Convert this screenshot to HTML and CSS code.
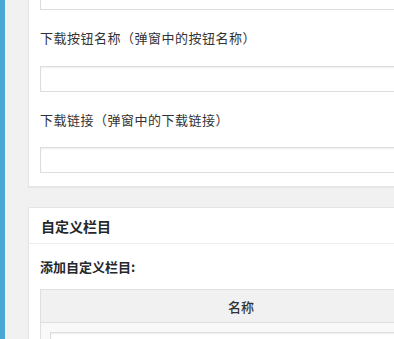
FILE: index.html
```
<!DOCTYPE html>
<html lang="zh-CN">

<head>
    <meta charset="UTF-8">
    <meta name="viewport" content="width=device-width, initial-scale=1.0">
    <title>自定义栏目</title>

    <link rel="stylesheet" href="styles.css">
</head>

<body>
    <div class="wrapper">
        <div class="sidebar"></div>
        <div class="content">
            <div class="postbox postbox-top">
                <div class="inside">
                    <input class="input-style" type="text">
                    <p class="field-label">下载按钮名称（弹窗中的按钮名称）</p>
                    <input class="input-style" type="text">
                    <p class="field-label">下载链接（弹窗中的下载链接）</p>
                    <input class="input-style input-last" type="text">
                </div>
            </div>

            <div class="postbox">
                <h2 class="postbox-title">自定义栏目</h2>
                <div class="inside">
                    <p class="add-title">添加自定义栏目:</p>
                    <table class="meta-table">
                        <thead>
                            <tr>
                                <th class="col-name">名称</th>
                                <th class="col-value">值</th>
                            </tr>
                        </thead>
                        <tbody>
                            <tr>
                                <td><input class="input-style" type="text"></td>
                                <td><input class="input-style" type="text"></td>
                            </tr>
                        </tbody>
                    </table>
                </div>
            </div>
        </div>
    </div>
</body>

</html>
```

FILE: styles.css
```
:root {
    --text-color: #333333;
    --border-color: #e5e5e5;
    --input-border: #dddddd;
    --background-color: #f1f1f1;
    --blue: #4aa6d3;
}

* {
    margin: 0;
    padding: 0;
    box-sizing: border-box;
}

html,
body {
    height: 100%;
    overflow: hidden;
}

body {
    background-color: var(--background-color);
    font-family: "Noto Sans CJK SC", "Liberation Sans", sans-serif;
    font-size: 13px;
    color: var(--text-color);
}

.wrapper {
    display: flex;
    height: 100%;
}

.sidebar {
    flex: 0 0 5px;
    background-color: var(--blue);
}

.content {
    flex: 0 0 auto;
    width: 700px;
    padding-left: 23px;
}

.postbox {
    background-color: #fff;
    border: 1px solid var(--border-color);
    box-shadow: 0 1px 1px rgba(0, 0, 0, 0.04);
    margin-bottom: 20px;
}

.postbox-top {
    margin-top: -30px;
}

.inside {
    padding: 0 11px 13px;
}

.postbox-top .inside {
    padding-top: 13px;
}

.input-style {
    display: block;
    width: 100%;
    height: 26px;
    border: 1px solid var(--input-border);
    background-color: #fff;
    box-shadow: inset 0 1px 2px rgba(0, 0, 0, 0.07);
    font: inherit;
}

.field-label {
    line-height: 20px;
    margin: 18px 0;
    letter-spacing: 0.5px;
}

.field-label + .input-last {
    margin-top: -1px;
}

.postbox-title {
    font-size: 14px;
    font-weight: 600;
    line-height: 20px;
    padding: 8px 12px 7px;
    border-bottom: 1px solid #eeeeee;
    color: #23282d;
}

.add-title {
    font-weight: 600;
    line-height: 20px;
    margin: 13px 0 12px;
    color: #23282d;
}

.meta-table {
    width: 660px;
    border: 1px solid #dfdfdf;
    border-collapse: separate;
    border-spacing: 0;
    background-color: #f9f9f9;
}

.meta-table th {
    background-color: #f1f1f1;
    font-weight: 500;
    height: 33px;
    text-align: center;
    border-bottom: 1px solid #dfdfdf;
}

.meta-table .col-name {
    width: 400px;
}

.meta-table td {
    padding: 9px 9px;
}
```
